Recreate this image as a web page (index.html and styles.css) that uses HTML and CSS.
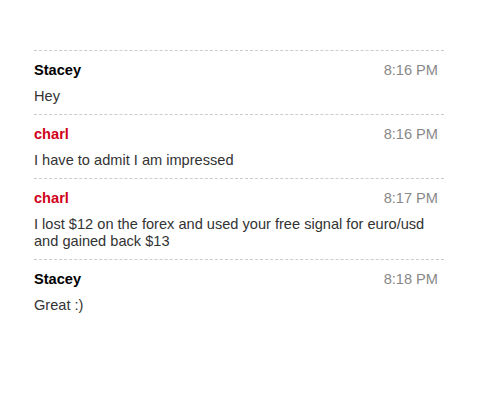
FILE: index.html
```html
<!DOCTYPE html>
<html>
<head>
<meta charset="utf-8">
<link rel="stylesheet" href="styles.css">
</head>
<body>
<div class="chat">
  <div class="msg">
    <div class="head"><span class="name">Stacey</span><span class="time">8:16 PM</span></div>
    <div class="text">Hey</div>
  </div>
  <div class="msg">
    <div class="head"><span class="name red">charl</span><span class="time">8:16 PM</span></div>
    <div class="text">I have to admit I am impressed</div>
  </div>
  <div class="msg">
    <div class="head"><span class="name red">charl</span><span class="time">8:17 PM</span></div>
    <div class="text">I lost $12 on the forex and used your free signal for euro/usd and gained back $13</div>
  </div>
  <div class="msg">
    <div class="head"><span class="name">Stacey</span><span class="time">8:18 PM</span></div>
    <div class="text">Great :)</div>
  </div>
</div>
</body>
</html>
```
FILE: styles.css
```css
html, body { margin: 0; padding: 0; background: #fff; }
body { font-family: "Liberation Sans", Arial, sans-serif; font-size: 14.6px; line-height: 16px; color: #333; }
.chat { width: 410px; margin: 50px 0 0 34px; }
.msg { border-top: 1px dashed #ccc; padding: 11px 6px 9px 0; }
.head { display: flex; justify-content: space-between; margin-bottom: 10px; }
.name { font-weight: bold; color: #000; }
.name.red { color: #d0021b; }
.time { color: #888; }
.text { color: #333; line-height: 17px; }
```
